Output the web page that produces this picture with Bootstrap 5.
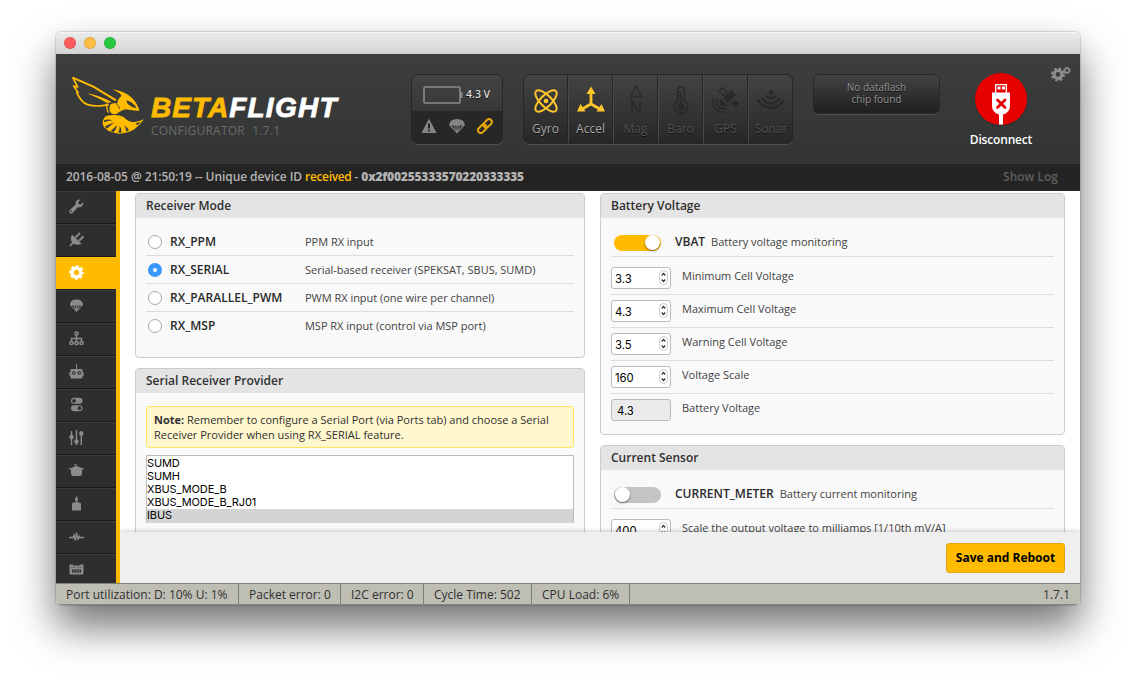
<!DOCTYPE html>
<html lang="en">
<head>
<meta charset="utf-8">
<title>Betaflight Configurator</title>
<link href="https://cdn.jsdelivr.net/npm/bootstrap@5.3.0/dist/css/bootstrap.min.css" rel="stylesheet">
<style>
body{background:#fff;font-family:"Open Sans",sans-serif;font-size:12px;line-height:15px;color:#303030;height:684px;overflow:hidden;padding:32px 56px}
svg{display:block;flex:none}
.app-window{width:1024px;height:573px;border-radius:5px;overflow:hidden;background:#fff}
.win-shadow{width:1024px;height:573px;border-radius:5px;box-shadow:0 22px 40px rgba(0,0,0,.55),0 0 2px rgba(0,0,0,.45)}
.titlebar{height:22px;background:linear-gradient(#ebebeb,#d3d3d3);padding-left:8px;gap:8px;box-shadow:inset 0 1px #f5f5f5}
.dot{width:12px;height:12px;border-radius:50%;border:1px solid rgba(0,0,0,.12)}
.app-head{height:110px;background:linear-gradient(#3c3e3d,#333534)}
.brand{margin:21px 0 0 14px;width:341px;flex:none}
.brand-name{font:italic bold 28px/24px "Liberation Sans",sans-serif;color:#fff;-webkit-text-stroke:.8px;letter-spacing:1.25px;margin:21px 0 0 6px;white-space:nowrap}
.brand-name span{color:#ffbb00;letter-spacing:1px}
.brand-sub{font-size:12px;line-height:14px;color:#6b6b6b;margin:4px 0 0 6px;word-spacing:4px;letter-spacing:.22px;white-space:nowrap}
.gloss{border:1px solid #272727;border-radius:6px;background:linear-gradient(#434343,#272727);box-shadow:0 1px 0 #4f4f4f;margin-top:20px;text-shadow:0 1px #111;flex:none}
.batt{width:92px;height:70px;overflow:hidden;background:linear-gradient(#434343,#373737 36px,#272727 36px)}
.batt-top{height:36px;padding:3px 0 0 11px}
.batt-top span{font-size:10.5px;color:#dcdcdc;font-weight:600;margin-left:3px;white-space:nowrap}
.batt-low{padding:0 9px 2px 9px;height:31px}
.sensors{width:270px;height:70px;margin-left:20px;overflow:hidden}
.sensor{width:45px;flex:none;border-right:1px solid #262626;border-left:1px solid #484848;padding-top:8px;color:#525252;font-size:12px}
.sensor:last-child{border-right:0}.sensor:first-child{border-left:0;width:44px}
.sensor svg{margin-bottom:4px}
.sensor.lit{color:#a6a6a6}
.flash{width:127px;height:40px;margin-left:20px;color:#949494;font-size:10px;line-height:12px;padding-top:6px;background:linear-gradient(#434343,#1f1f1f)}
.conn{width:100px;margin-left:11px;margin-top:18px;color:#fff;font-weight:600;font-size:12px;letter-spacing:-.18px;flex:none}
.cog{margin:12px 11px 0 auto}
.logbar{height:27px;background:#242424;color:#b4b4b4;padding:0 22px 2px 10px;font-weight:600;font-size:12px}
.logtext{letter-spacing:-.07px}
.logbar .received{color:#ffbb00;letter-spacing:-.35px}
.logtext b{letter-spacing:-.19px}
.showlog{color:#5f5f5f;font-size:12px}
.workspace{height:392px}
.side{width:64px;background:#2e2e2e;border-right:4px solid #ffbb00;overflow:hidden}
.tab{height:33px;border-top:1px solid #3b3b3b;border-bottom:1px solid #1b1b1b;padding-left:13px;padding-bottom:2px;flex:none}
.tab.sel{background:#ffbb00;border-top-color:#ffbb00}
.main-area{height:392px;overflow:hidden;position:relative}
.cols{padding:2px 15px 0 15px;gap:15px;height:341px;overflow:hidden}
.panel{border:1px solid #ccc;border-radius:4px;background:#f9f9f9;overflow:hidden;margin-bottom:10px}
.panel h2{font-size:12px;font-weight:600;line-height:24px;height:24px;background:#e4e4e4;margin:0;padding-left:10px;color:#303030}
.pbody{padding:10px 10px 0}
.lcol{width:450px}.rcol{width:465px}
.mode{height:28px;border-bottom:1px solid #ddd;padding-left:2px}
.mode:last-child{border:0;height:27px}
.rad{width:14px;height:14px;border:1px solid #aaa;border-radius:50%;background:#fff;flex:none;margin-right:8px}
.rad.on{border:5px solid #3b99fc}
.nm{width:135px;font-weight:600;font-size:12px;color:#2a2a2a}
.ds{font-size:11px;color:#434343;white-space:nowrap;letter-spacing:-.02px}
.note-box{margin-top:3px;border:1px solid #ffe55f;background:#fff7cd;border-radius:3px;padding:5px 7px 0;height:42px;font-size:11px}
.picker{margin-top:7px;border:1px solid #bbb;background:#fff;height:68px;font:11px/13px Inter,sans-serif;letter-spacing:-.12px;color:#000;padding-top:1px}
.picker div{padding-left:0;height:13px}
.picker div:last-child{background:#d4d4d4;height:14px}
.swrow{height:29px;border-bottom:1px solid #ddd;padding-left:3px;padding-bottom:1px;margin-bottom:5px}
.sw{width:47px;height:16px;border-radius:8px;background:#ffbb00;margin-right:14px;margin-top:3px;flex:none}
.sw i{display:block;width:15px;height:15px;border-radius:50%;background:#fff;margin-left:31px;box-shadow:0 1px 2px rgba(0,0,0,.5)}
.sw.off{background:#c4c4c4}.sw.off i{margin-left:1px}
.swrow b{font-weight:600;font-size:12px;color:#2a2a2a;margin-right:6px}
.vrow{height:33px;padding-top:5px;border-bottom:1px solid #ddd}
.vrow:last-child{border:0}
.num{width:60px;height:22px;border:1px solid #bbb;border-radius:3px;background:#fff;font:11.3px/22px Inter,sans-serif;color:#000;padding:0 1px 0 3px;margin-right:11px;flex:none}
.num span{padding-top:2px}
.num.ro{background:#ebebeb;padding-left:5px}
.lbl{font-size:11px;line-height:18px;color:#434343;white-space:nowrap}
.savebar{height:51px;background:#efefef;box-shadow:0 -1px 4px rgba(0,0,0,.2);position:relative;padding-right:15px}
.btn-save{background:#ffbb00;border:1px solid #dba718;border-radius:3px;height:30px;width:119px;padding:0;font-size:12px;font-weight:700;color:#000;white-space:nowrap}
.status{height:22px;background:#bfbeb5;border-top:1px solid #7d8079;border-bottom:1px solid #85877f;font-size:12px}
.cell{border-right:1px solid #7d8079;padding-left:10px;padding-top:3px;height:20px;white-space:nowrap}
</style>
</head>
<body>
<div class="win-shadow"><div class="app-window d-flex flex-column">
<div class="titlebar d-flex align-items-center"><span class="dot" style="background:#ff5c5c"></span><span class="dot" style="background:#ffbe43"></span><span class="dot" style="background:#27c941"></span></div>

<header class="app-head d-flex align-items-start">
 <div class="brand d-flex">
  <svg width="75" height="60" viewBox="60 155 225 180">
   <g fill="none" stroke="#ffbb00" stroke-linejoin="round">
    <path stroke-width="6" d="M68 163L130 190L198 231"/>
    <path stroke-width="5" d="M68 162L83 191L71 188L84 207L80 207Q94 238 113 244Q140 252 176 244"/>
    <path stroke-width="4" d="M171 240Q168 258 176 268"/>
   </g>
   <g fill="#ffbb00">
    <path d="M111 210Q140 213 185 236L172 239Q140 222 111 210Z"/>
    <path d="M187 198Q224 203 246 224Q264 242 268 263Q246 262 228 258Q216 259 207 267Q197 276 186 271Q176 264 179 250Q180 241 192 240L202 240Q203 226 214 219Q217 212 187 198Z"/>
    <path d="M168 278Q200 270 221 281Q236 298 254 296Q268 294 282 288Q267 308 253 318Q232 331 207 331Q168 327 159 306Q155 289 168 278Z"/>
   </g>
   <path fill="#393b3a" d="M229 231Q250 237 260 255Q244 252 233 242Z"/>
   <path fill="#393b3a" d="M163 290Q175 287 188 291Q173 292 162 297ZM165 309Q178 304 192 297Q181 309 170 316ZM182 323Q193 314 201 305Q199 317 191 327ZM205 328Q210 316 209 307Q216 317 214 328ZM229 325Q228 314 222 306Q234 314 237 321ZM262 306Q267 302 271 295Q262 299 256 299Q260 302 262 306Z"/>
   <path fill="none" stroke="#393b3a" stroke-width="2.500" d="M198 240Q206 246 209 257"/>
  </svg>
  <div><div class="brand-name"><span>BETA</span>FLIGHT</div><div class="brand-sub">CONFIGURATOR 1.7.1</div></div>
 </div>
 <div class="gloss batt">
  <div class="batt-top d-flex align-items-center"><svg width="40" height="18" viewBox="0 0 40 18"><rect x="1" y="1" width="36" height="16" rx="1" fill="none" stroke="#8a8a8a" stroke-width="1.600"/><path fill="#8a8a8a" d="M37 6h2.500v6H37z"/></svg><span>4.3 V</span></div>
  <div class="batt-low d-flex align-items-center justify-content-between">
   <svg width="16" height="16" viewBox="0 0 16 16"><path fill="#858585" d="M8 .7L15.600 15H.4Z"/><path stroke="#272727" stroke-width="2" d="M8 5.500v5M8 11.700v1.800"/></svg>
   <svg width="16" height="16" viewBox="0 0 16 16"><path fill="#858585" d="M0 7Q1 1 8 1T16 7L8 15.500Z"/><path fill="#272727" d="M2.500 7.700L4.500 7.300L7 13ZM5.700 7.500L7.500 8V12.500ZM8.500 8L10.400 7.500L8.500 12.500ZM11.500 7.300L13.500 7.700L9 13Z"/></svg>
   <svg width="16" height="16" viewBox="0 0 16 16"><g transform="rotate(-45 8 8)" fill="none" stroke="#e5a80c" stroke-width="2"><rect x="-.7" y="5.200" width="9.700" height="5.600" rx="2.800"/><rect x="6.800" y="5.200" width="9.700" height="5.600" rx="2.800"/></g></svg>
  </div>
 </div>
 <div class="gloss sensors d-flex">
  <div class="sensor lit d-flex flex-column align-items-center"><svg width="32" height="34" viewBox="0 0 32 34"><g fill="none" stroke="#ffc62b" stroke-width="2"><ellipse cx="16" cy="18" rx="14" ry="5.600" transform="rotate(45 16 18)"/><ellipse cx="16" cy="18" rx="14" ry="5.600" transform="rotate(-45 16 18)"/></g><circle cx="16" cy="18" r="2.300" fill="#ffc62b"/></svg>Gyro</div>
  <div class="sensor lit d-flex flex-column align-items-center"><svg width="32" height="34" viewBox="0 0 32 34"><path fill="none" stroke="#ffc62b" stroke-width="2.800" d="M16 8V21L5.500 27M16 21L26.500 27"/><path fill="#ffc62b" d="M16 3.500L20.500 11H11.500ZM2 28.500L5.500 21L10.500 28.500ZM30 28.500L26.500 21L21.500 28.500Z"/></svg>Accel</div>
  <div class="sensor d-flex flex-column align-items-center"><svg width="32" height="34" viewBox="0 0 32 34"><path fill="none" stroke="#292929" stroke-width="1.300" d="M16 3L21.500 13.500H10.500Z"/><path fill="none" stroke="#292929" stroke-width="1.800" d="M12 30V18L20 30V18"/></svg>Mag</div>
  <div class="sensor d-flex flex-column align-items-center"><svg width="32" height="34" viewBox="0 0 32 34"><path fill="none" stroke="#292929" stroke-width="1.700" d="M12.500 18V8Q12.500 4 16 4T19.500 8V18A6.700 6.700 0 1 1 12.500 18Z"/><path stroke="#292929" stroke-width="1.500" d="M16 10V23M12.500 9H16M12.500 13H16"/><circle cx="16" cy="24" r="3.800" fill="#292929"/></svg>Baro</div>
  <div class="sensor d-flex flex-column align-items-center"><svg width="32" height="34" viewBox="0 0 32 34"><g fill="#292929"><path d="M12.500 4.500L17 9L13.500 12.500L9 8Z" fill="none" stroke="#292929" stroke-width="1.200"/><path d="M21 7L26 12L18 20L13 15ZM25 16.500L29.500 21L25.500 25L21 20.500Z"/><path d="M10.500 15.500L17.500 22.500Q11.500 24 10 21.500T10.500 15.500Z"/></g><path fill="none" stroke="#292929" stroke-width="1.600" d="M6.500 16.500Q5.500 26 16 26M3 15.500Q2 29.500 16 29.500"/></svg>GPS</div>
  <div class="sensor d-flex flex-column align-items-center"><svg width="32" height="34" viewBox="0 0 32 34"><path fill="none" stroke="#292929" stroke-width="2.600" d="M2.500 17Q16 33 29.500 17M7 15Q16 26 25 15M11 12.500Q16 18 21 12.500"/><circle cx="16" cy="9.500" r="2.200" fill="#292929"/></svg>Sonar</div>
 </div>
 <div class="gloss flash text-center">No dataflash<br>chip found</div>
 <div class="conn d-flex flex-column align-items-center"><svg width="54" height="60" viewBox="0 0 54 60"><circle cx="27" cy="28" r="26.500" fill="#232323" opacity=".4"/><circle cx="27" cy="27" r="26" fill="#e60000"/><path fill="#fff" d="M21 12h12v9H21zM18 20.500h18v13q0 7-7 9v10h-4v-10q-7-2-7-9z"/><path fill="#e60000" d="M22.300 13.300h9.400v7.200h-9.400z"/><path fill="#fff" d="M23.500 14.500h3v3h-3zM28 14.500h3v3h-3z"/><path stroke="#e60000" stroke-width="2.800" stroke-linecap="round" d="M23.500 28L31 35.500M31 28L23.500 35.500"/></svg><span>Disconnect</span></div>
 <svg class="cog" style="margin-right:12px" width="20" height="16" viewBox="0 0 20 16"><g fill="none" stroke="#8c8f8d"><circle cx="7" cy="8.500" r="3.900" stroke-width="3"/><circle cx="7" cy="8.500" r="6" stroke-width="2" stroke-dasharray="2.560 2.152"/><circle cx="16" cy="4.500" r="2.200" stroke-width="1.500"/><circle cx="16" cy="4.500" r="3.300" stroke-width="1" stroke-dasharray="1.300 1.290"/></g></svg>
</header>

<div class="logbar d-flex align-items-center justify-content-between"><span class="logtext">2016-08-05 @ 21:50:19 -- Unique device ID <span class="received">received</span> - <b>0x2f00255333570220333335</b></span><span class="showlog">Show Log</span></div>

<div class="workspace d-flex">
 <nav class="side d-flex flex-column">
  <div class="tab d-flex align-items-center"><svg width="15" height="15" viewBox="0 0 15 15"><path fill="#8b8b8b" d="M14.300 3.200L11.600 5.400L9.600 4.900L9.200 3L11.700.6Q8.800-.2 7.200 2Q6.200 3.600 6.800 5.300L.7 11.300Q-.2 12.700.9 13.900Q2.200 14.900 3.500 13.900L9.100 7.900Q11 8.500 12.600 7.500Q14.700 6 14.300 3.200ZM2.300 13a.8.8 0 1 1 .01-1.600a.8.8 0 0 1 0 1.600Z"/></svg></div>
  <div class="tab d-flex align-items-center"><svg width="15" height="15" viewBox="0 0 15 15"><path fill="#8b8b8b" d="M3 2.500L12.500 11.500Q8 14 4.500 11.500L1.500 14.500L.3 13.500L3 10.500Q1 6.500 3 2.500Z"/><path stroke="#8b8b8b" stroke-width="1.900" d="M6.500 5.500L11 1M10 8.700L14.500 4.300"/></svg></div>
  <div class="tab sel d-flex align-items-center"><svg width="15" height="15" viewBox="0 0 15 15"><g fill="none" stroke="#fff"><circle cx="7.500" cy="7.500" r="4.300" stroke-width="3.200"/><circle cx="7.500" cy="7.500" r="6.200" stroke-width="2.200" stroke-dasharray="2.900 1.970" stroke-dashoffset="1.450"/></g></svg></div>
  <div class="tab d-flex align-items-center"><svg width="15" height="15" viewBox="0 0 16 16"><path fill="#8b8b8b" d="M1 7.500Q1 1.500 8 1.500T15 7.500L8 15Z"/><path fill="#2e2e2e" d="M2.700 8.300L4.500 7.700L6.800 12.300ZM5.700 7.800L7.500 8.300V12ZM8.500 8.300L10.400 7.800L8.500 12ZM11.500 7.700L13.300 8.300L9.200 12.300Z"/></svg></div>
  <div class="tab d-flex align-items-center"><svg width="15" height="15" viewBox="0 0 15 15"><g fill="none" stroke="#8b8b8b" stroke-width="1.500"><circle cx="7.500" cy="2.500" r="1.500"/><path d="M7.500 4V10M2.500 10V7.500H12.500V10"/><circle cx="2.500" cy="12" r="1.600"/><circle cx="7.500" cy="12" r="1.600"/><circle cx="12.500" cy="12" r="1.600"/></g></svg></div>
  <div class="tab d-flex align-items-center"><svg width="15" height="15" viewBox="0 0 15 15"><path fill="#8b8b8b" d="M7 0h1v5h4.500q1 0 1 1v7.500q0 1-1 1h-10q-1 0-1-1V6q0-1 1-1H7zM.3 8h1v4h-1zM13.700 8h1v4h-1z"/><g fill="#2e2e2e"><circle cx="4.800" cy="9" r="1.800"/><circle cx="10.200" cy="9" r="1.800"/></g><g fill="#8b8b8b"><circle cx="4.800" cy="9" r=".8"/><circle cx="10.200" cy="9" r=".8"/></g></svg></div>
  <div class="tab d-flex align-items-center"><svg width="15" height="15" viewBox="0 0 15 15"><rect x="2" y=".8" width="11.500" height="6" rx="3" fill="#8b8b8b"/><rect x="2" y="8.200" width="11.500" height="6" rx="3" fill="#8b8b8b"/><circle cx="5" cy="3.800" r="1.900" fill="#2e2e2e"/><circle cx="10.500" cy="11.200" r="1.900" fill="#2e2e2e"/></svg></div>
  <div class="tab d-flex align-items-center"><svg width="15" height="15" viewBox="0 0 15 15"><path stroke="#8b8b8b" stroke-width="1.400" d="M2.500 1V15M7.500 0V15M12.300 1V15"/><g fill="#8b8b8b"><circle cx="2.500" cy="7" r="2.200"/><circle cx="7.500" cy="11.500" r="2.200"/><circle cx="12.300" cy="3.500" r="2.200"/></g></svg></div>
  <div class="tab d-flex align-items-center"><svg width="15" height="15" viewBox="0 0 15 15"><path fill="#8b8b8b" d="M.2 5h2L7 2.800V1.500L5.500 2.500L5 1.500L7 .8Q8 1.800 7.800 3L12.700 5h2v1.500H13V10q0 3-2.500 3h-6Q2 13 2 10V6.500H.2z"/></svg></div>
  <div class="tab d-flex align-items-center"><svg width="15" height="15" viewBox="0 0 15 15"><path fill="#8b8b8b" d="M7.500 0Q10 3.500 8.300 5V6.500h2.200q1.500 0 1.500 1.500v6.500H3V8q0-1.500 1.500-1.500h2.200V5Q5 3.500 7.500 0Z"/></svg></div>
  <div class="tab d-flex align-items-center"><svg width="15" height="15" viewBox="0 0 15 15"><path fill="none" stroke="#8b8b8b" stroke-width="1.300" d="M0 8.500H4L5 6L6.200 11.500L7.500 3.500L8.800 11L10 7L10.800 8.500H15"/></svg></div>
  <div class="tab d-flex align-items-center"><svg width="15" height="15" viewBox="0 0 15 15"><path fill="#8b8b8b" d="M.5 2.500h3l1 1h6l1-1h3v9q0 1-1 1h-12q-1 0-1-1z"/><path fill="#2e2e2e" d="M3 7.500h9v3h-9zM2.500 4.800h1v1h-1zM5.300 4.800h1v1h-1zM8.700 4.800h1v1h-1zM11.500 4.800h1v1h-1z"/><path stroke="#8b8b8b" d="M4 9h1.500M6.500 9h2M9.500 9h1.500"/></svg></div>
 </nav>
 <main class="main-area flex-grow-1">
  <div class="cols d-flex align-items-start">
   <div class="lcol">
    <section class="panel" style="height:165px"><h2>Receiver Mode</h2><div class="pbody">
     <div class="mode d-flex align-items-center"><span class="rad"></span><span class="nm">RX_PPM</span><span class="ds">PPM RX input</span></div>
     <div class="mode d-flex align-items-center"><span class="rad on"></span><span class="nm">RX_SERIAL</span><span class="ds">Serial-based receiver (SPEKSAT, SBUS, SUMD)</span></div>
     <div class="mode d-flex align-items-center"><span class="rad"></span><span class="nm">RX_PARALLEL_PWM</span><span class="ds">PWM RX input (one wire per channel)</span></div>
     <div class="mode d-flex align-items-center"><span class="rad"></span><span class="nm">RX_MSP</span><span class="ds">MSP RX input (control via MSP port)</span></div>
    </div></section>
    <section class="panel" style="height:190px"><h2>Serial Receiver Provider</h2><div class="pbody">
     <div class="note-box"><b>Note:</b> Remember to configure a Serial Port (via Ports tab) and choose a Serial<br>Receiver Provider when using RX_SERIAL feature.</div>
     <div class="picker"><div>SUMD</div><div>SUMH</div><div>XBUS_MODE_B</div><div>XBUS_MODE_B_RJ01</div><div>IBUS</div></div>
    </div></section>
   </div>
   <div class="rcol">
    <section class="panel" style="height:242px"><h2>Battery Voltage</h2><div class="pbody">
     <div class="swrow d-flex align-items-center"><span class="sw"><i></i></span><b>VBAT</b><span class="ds">Battery voltage monitoring</span></div>
     <div class="vrow d-flex"><div class="num d-flex justify-content-between align-items-center"><span>3.3</span><svg width="10" height="16" viewBox="0 0 10 16"><rect x=".5" y=".5" width="8" height="14" rx="4" fill="#fff" stroke="#ccc"/><path fill="none" stroke="#333" stroke-width="1.200" d="M2.700 5.500L4.500 3.500L6.300 5.500M2.700 9.500L4.500 11.500L6.300 9.500"/></svg></div><span class="lbl">Minimum Cell Voltage</span></div>
     <div class="vrow d-flex"><div class="num d-flex justify-content-between align-items-center"><span>4.3</span><svg width="10" height="16" viewBox="0 0 10 16"><rect x=".5" y=".5" width="8" height="14" rx="4" fill="#fff" stroke="#ccc"/><path fill="none" stroke="#333" stroke-width="1.200" d="M2.700 5.500L4.500 3.500L6.300 5.500M2.700 9.500L4.500 11.500L6.300 9.500"/></svg></div><span class="lbl">Maximum Cell Voltage</span></div>
     <div class="vrow d-flex"><div class="num d-flex justify-content-between align-items-center"><span>3.5</span><svg width="10" height="16" viewBox="0 0 10 16"><rect x=".5" y=".5" width="8" height="14" rx="4" fill="#fff" stroke="#ccc"/><path fill="none" stroke="#333" stroke-width="1.200" d="M2.700 5.500L4.500 3.500L6.300 5.500M2.700 9.500L4.500 11.500L6.300 9.500"/></svg></div><span class="lbl">Warning Cell Voltage</span></div>
     <div class="vrow d-flex"><div class="num d-flex justify-content-between align-items-center"><span>160</span><svg width="10" height="16" viewBox="0 0 10 16"><rect x=".5" y=".5" width="8" height="14" rx="4" fill="#fff" stroke="#ccc"/><path fill="none" stroke="#333" stroke-width="1.200" d="M2.700 5.500L4.500 3.500L6.300 5.500M2.700 9.500L4.500 11.500L6.300 9.500"/></svg></div><span class="lbl">Voltage Scale</span></div>
     <div class="vrow d-flex"><div class="num ro">4.3</div><span class="lbl">Battery Voltage</span></div>
    </div></section>
    <section class="panel" style="height:150px"><h2>Current Sensor</h2><div class="pbody">
     <div class="swrow d-flex align-items-center"><span class="sw off"><i></i></span><b>CURRENT_METER</b><span class="ds">Battery current monitoring</span></div>
     <div class="vrow d-flex"><div class="num d-flex justify-content-between align-items-center"><span>400</span><svg width="10" height="16" viewBox="0 0 10 16"><rect x=".5" y=".5" width="8" height="14" rx="4" fill="#fff" stroke="#ccc"/><path fill="none" stroke="#333" stroke-width="1.200" d="M2.700 5.500L4.500 3.500L6.300 5.500M2.700 9.500L4.500 11.500L6.300 9.500"/></svg></div><span class="lbl">Scale the output voltage to milliamps [1/10th mV/A]</span></div>
    </div></section>
   </div>
  </div>
  <div class="savebar d-flex align-items-center justify-content-end"><button class="btn btn-save">Save and Reboot</button></div>
 </main>
</div>

<footer class="status d-flex">
 <div class="cell" style="width:183px">Port utilization: D: 10% U: 1%</div><div class="cell" style="width:102px">Packet error: 0</div><div class="cell" style="width:83px">I2C error: 0</div><div class="cell" style="width:108px">Cycle Time: 502</div><div class="cell" style="width:98px">CPU Load: 6%</div><div class="cell border-0 ms-auto" style="padding-right:10px">1.7.1</div>
</footer>
</div></div>
<script src="https://cdn.jsdelivr.net/npm/bootstrap@5.3.0/dist/js/bootstrap.bundle.min.js"></script>
</body>
</html>
